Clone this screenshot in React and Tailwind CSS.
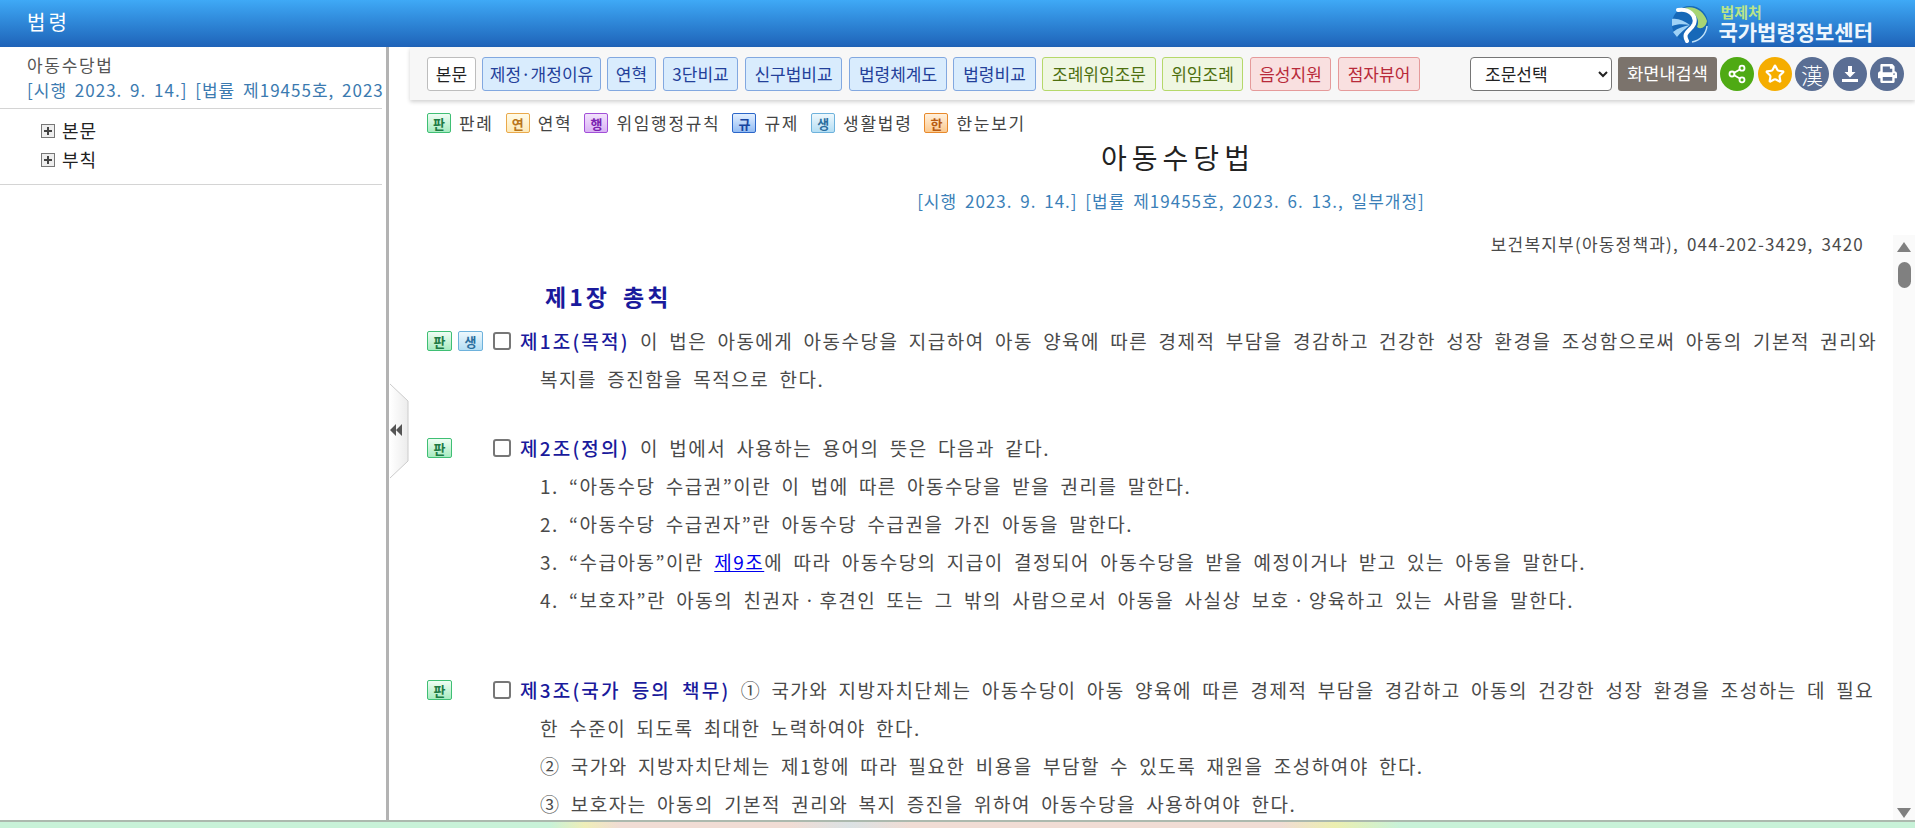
import { Share2, Star } from 'lucide-react';
import { FaPrint } from 'react-icons/fa';

const KR = "font-['Noto_Sans_CJK_KR','Noto_Sans',sans-serif]";

const BLUE = 'bg-[#d9ecfd] border-[#82a8e0] text-[#23409a]';
const GREEN = 'bg-[#eff7e2] border-[#b5d86a] text-[#4e7010]';
const RED = 'bg-[#f9e0e0] border-[#e59a9a] text-[#b82a3a]';

const TOOLBAR = [
  { label: '본문', w: 'w-[49px]', tone: 'bg-white border-[#bdbdbd] text-[#222]' },
  { label: '제정·개정이유', w: 'w-[119px]', tone: BLUE },
  { label: '연혁', w: 'w-[49px] mr-[1px]', tone: BLUE },
  { label: '3단비교', w: 'w-[75px] mr-[1px]', tone: BLUE },
  { label: '신구법비교', w: 'w-[97px] mr-[1px]', tone: BLUE },
  { label: '법령체계도', w: 'w-[98px]', tone: BLUE },
  { label: '법령비교', w: 'w-[83px]', tone: BLUE },
  { label: '조례위임조문', w: 'w-[114px]', tone: GREEN },
  { label: '위임조례', w: 'w-[81px] mr-[1px]', tone: GREEN },
  { label: '음성지원', w: 'w-[81px] mr-[1px]', tone: RED },
  { label: '점자뷰어', w: 'w-[82px]', tone: RED },
];

const TAGS = {
  판: 'border-[#3fbf74] bg-gradient-to-b from-[#effdf4] to-[#a6ebc0] text-[#1d7a44]',
  연: 'border-[#eaa94a] bg-gradient-to-b from-[#fffbe8] to-[#fde9b8] text-[#b8751a]',
  행: 'border-[#a24fd8] bg-gradient-to-b from-[#f2e2fc] to-[#d9b2f4] text-[#7a22b0]',
  규: 'border-[#2b66c9] bg-gradient-to-b from-[#e2efff] to-[#93bcf3] text-[#1845a0]',
  생: 'border-[#6eb2dc] bg-gradient-to-b from-[#eef8fd] to-[#b4def4] text-[#2a6e9e]',
  한: 'border-[#e8892b] bg-gradient-to-b from-[#fff0dc] to-[#fbc98f] text-[#b85a10]',
};

function Tag({ kind, big }) {
  return (
    <span className={`inline-flex shrink-0 items-center justify-center rounded-[2px] border text-[13px] font-bold leading-none tracking-normal ${big ? 'h-[20px] w-[25px]' : 'h-[20px] w-[24px]'} ${TAGS[kind]}`}>
      {kind}
    </span>
  );
}

function LegendItem({ kind, text, className }) {
  return (
    <span className={`flex items-center gap-[8px] ${className}`}>
      <Tag kind={kind} />
      <span className="text-[17px] tracking-[1.7px] text-[#444]">{text}</span>
    </span>
  );
}

function CircleBtn({ bg, children }) {
  return (
    <span className={`flex h-[34px] w-[34px] shrink-0 items-center justify-center rounded-full text-white ${bg}`}>
      {children}
    </span>
  );
}

function PlusBox() {
  return (
    <svg width="14" height="14" viewBox="0 0 14 14" className="shrink-0">
      <rect x="0.5" y="0.5" width="13" height="13" fill="#eee" stroke="#777" />
      <path d="M3 7h8M7 3v8" stroke="#444" strokeWidth="2" />
    </svg>
  );
}

function Logo() {
  return (
    <svg width="40" height="38" viewBox="0 0 40 38" className="shrink-0">
      <circle cx="20" cy="19" r="18" fill="#1668b8" />
      <path d="M14 3C24 0 34 6 37 16C36 22 31 25 27 22C31 14 24 6 14 3Z" fill="#a8d574" />
      <path d="M2 14C8 13 14 16 20 20C13 19 7 19 2 21ZM3 27C8 23 14 21 20 20C15 24 10 28 7 32Z" fill="#9fd2f6" />
      <path d="M8 5C19 3 27 11 24 19C21 26 12 27 17 36" fill="none" stroke="#fff" strokeWidth="4" strokeLinecap="round" />
      <path d="M37 21A18 18 0 0 1 22 37" fill="none" stroke="#bfe0f8" strokeWidth="1.5" />
    </svg>
  );
}

function Article({ tags, title, first, rest, className }) {
  return (
    <div className={className}>
      <div className="flex h-[38px] items-center">
        <div className="flex w-[66px] shrink-0 gap-[6px]">
          {tags.map((t) => <Tag key={t} kind={t} big />)}
        </div>
        <span className="h-[18px] w-[18px] shrink-0 rounded-[3px] border-2 border-[#777] bg-white" />
        <p className="ml-[9px] whitespace-nowrap">
          <span className="font-medium tracking-[2.2px] text-[#1a1a9c]">{title}</span> {first}
        </p>
      </div>
      {rest.map((line, i) => (
        <p key={i} className="ml-[113px] h-[38px] whitespace-nowrap">{line}</p>
      ))}
    </div>
  );
}

export default function App() {
  return (
    <div className={`flex h-screen w-full flex-col overflow-hidden bg-white ${KR}`}>
      {/* Top bar */}
      <header className="flex h-[47px] shrink-0 items-center justify-between bg-gradient-to-b from-[#3fa9f6] to-[#1f63b8] pl-[27px] pr-[42px]">
        <span className="pb-[3px] text-[20px] tracking-[3px] text-white">법령</span>
        <div className="flex items-center gap-[8px]">
          <Logo />
          <div className="flex flex-col leading-none">
            <span className="ml-[2px] text-[15px] font-bold leading-[16px] text-[#b9e489]">법제처</span>
            <span className="text-[21px] font-bold leading-[23px] text-[#eef6fd]">국가법령정보센터</span>
          </div>
        </div>
      </header>

      <div className="flex min-h-0 flex-1">
        {/* Left tree */}
        <aside className="w-[386px] shrink-0 overflow-hidden">
          <div className="mr-[4px] h-[62px] border-b border-[#d4d4d4] pl-[27px] pt-[5px] text-[17px] leading-[25px]">
            <p className="h-[25px] tracking-[1.7px] text-[#555]">아동수당법</p>
            <p className="h-[26px] whitespace-nowrap tracking-[1px] text-[#3b7ab0] [word-spacing:3px]">[시행 2023. 9. 14.] [법률 제19455호, 2023</p>
          </div>
          <div className="mr-[4px] h-[76px] border-b border-[#d4d4d4] pl-[41px] pt-[7px] text-[18px] tracking-[1px] text-[#222]">
            <p className="flex h-[29px] items-center gap-[7px]"><PlusBox />본문</p>
            <p className="flex h-[29px] items-center gap-[7px]"><PlusBox />부칙</p>
          </div>
        </aside>
        <div className="w-[3px] shrink-0 bg-[#b3b3b3]" />

        {/* Right pane */}
        <main className="relative flex min-w-0 flex-1 flex-col">
          {/* Collapse handle */}
          <svg width="22" height="96" viewBox="0 0 22 96" className="absolute left-0 top-[336px] z-10">
            <defs>
              <linearGradient id="handle" x1="0" x2="1" y1="0" y2="0">
                <stop offset="0" stopColor="#fff" />
                <stop offset="1" stopColor="#ececec" />
              </linearGradient>
            </defs>
            <path d="M1 1L19 18V78L1 95" fill="url(#handle)" stroke="#ccc" />
            <path d="M7 41L1 47L7 53ZM13 41L7 47L13 53Z" fill="#555" />
          </svg>

          <div className="ml-[21px] flex h-[53px] shrink-0 items-center bg-[#f7f7f7] pl-[17px] shadow-[0_2px_4px_rgba(0,0,0,0.18)]">
            <div className="flex gap-[6px]">
              {TOOLBAR.map((b) => (
                <span key={b.label} className={`flex h-[34px] items-center justify-center rounded-[3px] border text-[17px] ${b.w} ${b.tone}`}>
                  {b.label}
                </span>
              ))}
            </div>
            <select defaultValue="조문선택" className="ml-[50px] h-[34px] w-[142px] rounded-[4px] border border-[#767676] bg-white pl-[10px] text-[17px] text-[#222]">
              <option>조문선택</option>
            </select>
            <span className="ml-[6px] flex h-[34px] w-[99px] items-center justify-center rounded-[3px] bg-[#7b736c] text-[17.5px] text-white">화면내검색</span>
            <div className="ml-[3px] flex gap-[3.5px]">
              <CircleBtn bg="bg-[#4faa14]"><Share2 size={20} strokeWidth={2.2} /></CircleBtn>
              <CircleBtn bg="bg-[#f5ad00]"><Star size={20} strokeWidth={2.6} /></CircleBtn>
              <CircleBtn bg="bg-[#5a6e94]"><span className="text-[22px] font-light leading-none">漢</span></CircleBtn>
              <CircleBtn bg="bg-[#5a6e94]">
                <svg width="20" height="20" viewBox="0 0 20 20" fill="#fff">
                  <path d="M8 2h4v6h3.5L10 13.5 4.5 8H8z" />
                  <rect x="2" y="15" width="16" height="3" />
                </svg>
              </CircleBtn>
              <CircleBtn bg="bg-[#5a6e94]"><FaPrint size={19} /></CircleBtn>
            </div>
          </div>

          <div className="h-[135px] shrink-0 pl-[38px]">
            <div className="flex h-[44px] items-center pt-[2px]">
              <LegendItem kind="판" text="판례" className="mr-[12px]" />
              <LegendItem kind="연" text="연혁" className="mr-[12px]" />
              <LegendItem kind="행" text="위임행정규칙" className="mr-[12px]" />
              <LegendItem kind="규" text="규제" className="mr-[12px]" />
              <LegendItem kind="생" text="생활법령" className="mr-[12px]" />
              <LegendItem kind="한" text="한눈보기" />
            </div>
            <h1 className="ml-[14px] mt-[-7px] h-[40px] text-center text-[28px] leading-[40px] tracking-[5px] text-[#222]">아동수당법</h1>
            <p className="mt-[12px] text-center text-[17px] leading-[24px] tracking-[1px] text-[#3b7fb8] [word-spacing:3px]">[시행 2023. 9. 14.] [법률 제19455호, 2023. 6. 13., 일부개정]</p>
          </div>

          <div className="flex min-h-0 flex-1">
            <div className="min-w-0 flex-1 overflow-hidden pl-[38px] text-[19px] leading-[38px] tracking-[1.5px] text-[#4a4a4a] [word-spacing:4.5px]">
              <p className="h-[18px] whitespace-nowrap pr-[29px] text-right text-[17px] leading-[18px] tracking-[1.2px] [word-spacing:3px]">보건복지부(아동정책과), 044-202-3429, 3420</p>
              <h2 className="ml-[118px] mt-[24px] h-[46px] text-[23px] font-bold leading-[38px] tracking-[3px] text-[#1a1a9c] [word-spacing:5px]">제1장 총칙</h2>
              <Article
                className="mb-[31px] mt-[-1px]"
                tags={['판', '생']}
                title="제1조(목적)"
                first="이 법은 아동에게 아동수당을 지급하여 아동 양육에 따른 경제적 부담을 경감하고 건강한 성장 환경을 조성함으로써 아동의 기본적 권리와"
                rest={['복지를 증진함을 목적으로 한다.']}
              />
              <Article
                className="mb-[52px]"
                tags={['판']}
                title="제2조(정의)"
                first="이 법에서 사용하는 용어의 뜻은 다음과 같다."
                rest={[
                  '1. “아동수당 수급권”이란 이 법에 따른 아동수당을 받을 권리를 말한다.',
                  '2. “아동수당 수급권자”란 아동수당 수급권을 가진 아동을 말한다.',
                  <>3. “수급아동”이란 <span className="text-[#0000ee] underline">제9조</span>에 따라 아동수당의 지급이 결정되어 아동수당을 받을 예정이거나 받고 있는 아동을 말한다.</>,
                  '4. “보호자”란 아동의 친권자ㆍ후견인 또는 그 밖의 사람으로서 아동을 사실상 보호ㆍ양육하고 있는 사람을 말한다.',
                ]}
              />
              <Article
                tags={['판']}
                title="제3조(국가 등의 책무)"
                first="① 국가와 지방자치단체는 아동수당이 아동 양육에 따른 경제적 부담을 경감하고 아동의 건강한 성장 환경을 조성하는 데 필요"
                rest={[
                  '한 수준이 되도록 최대한 노력하여야 한다.',
                  '② 국가와 지방자치단체는 제1항에 따라 필요한 비용을 부담할 수 있도록 재원을 조성하여야 한다.',
                  '③ 보호자는 아동의 기본적 권리와 복지 증진을 위하여 아동수당을 사용하여야 한다.',
                ]}
              />
            </div>
            {/* Scrollbar */}
            <div className="flex w-[22px] shrink-0 flex-col items-center bg-[#fafafa] pt-[7px]">
              <span className="h-0 w-0 border-x-[7px] border-b-[10px] border-x-transparent border-b-[#808080]" />
              <span className="mt-[10px] h-[26px] w-[13px] rounded-full bg-[#808080]" />
              <span className="mt-auto mb-[2px] h-0 w-0 border-x-[7px] border-t-[10px] border-x-transparent border-t-[#808080]" />
            </div>
          </div>
        </main>
      </div>

      {/* Footer strip */}
      <footer className="h-[8px] shrink-0 border-t-2 border-[#acb9ae] bg-[linear-gradient(90deg,#c8f2d8_0,#c8f2d8_550px,#efeeb8_585px,#f0dcd4_620px,#f0dcd4_790px,#dbe2e4_850px,#f0dcd4_910px,#f0dcd4_1280px,#ecefb0_1335px,#c8f2d8_1400px,#c8f2d8_100%)]" />
    </div>
  );
}
